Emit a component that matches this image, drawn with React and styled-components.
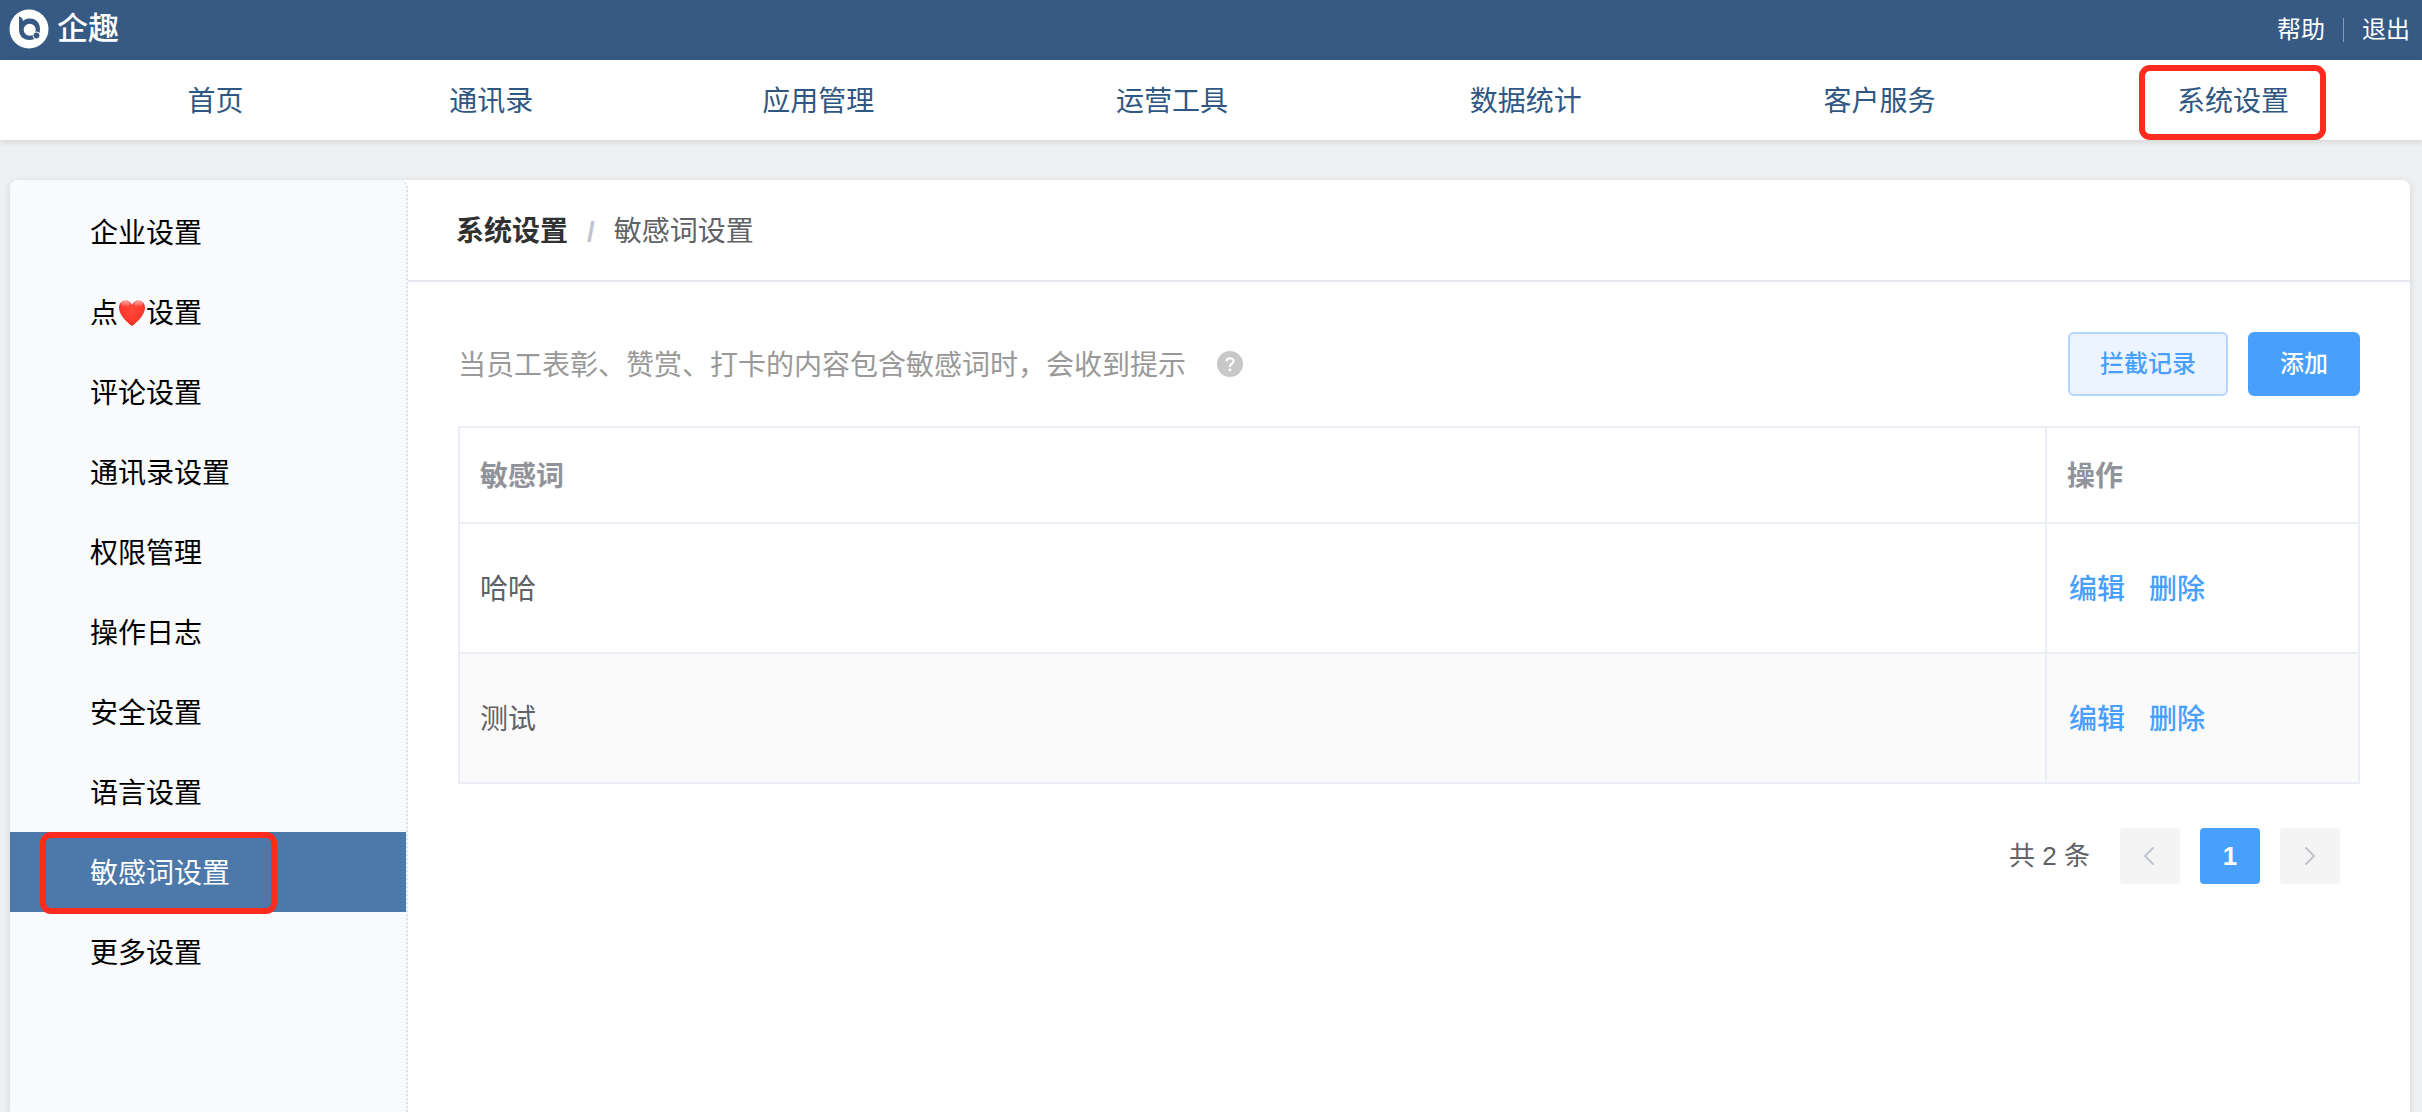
import React from 'react'
import styled, { createGlobalStyle, css } from 'styled-components';

const navItems = [
    { label: "首页", grow: 251 },
    { label: "通讯录", grow: 301 },
    { label: "应用管理", grow: 354 },
    { label: "运营工具", grow: 354 },
    { label: "数据统计", grow: 354 },
    { label: "客户服务", grow: 354 },
    { label: "系统设置", grow: 354, marked: true },
];

const menuItems = [
    { id: "company", label: "企业设置" },
    { id: "like", label: <>点<Heart />设置</> },
    { id: "comment", label: "评论设置" },
    { id: "contacts", label: "通讯录设置" },
    { id: "auth", label: "权限管理" },
    { id: "log", label: "操作日志" },
    { id: "safe", label: "安全设置" },
    { id: "lang", label: "语言设置" },
    { id: "words", label: "敏感词设置", active: true },
    { id: "more", label: "更多设置" },
];

const words = ["哈哈", "测试"];

function Logo() {
    return (
        <svg width="40" height="40" viewBox="0 0 40 40" aria-hidden="true">
            <circle cx="20" cy="20" r="19.5" fill="#fff" />
            <path d="M10 7.500 C12 8 13.500 9 14 12 C16 10 18.500 9.500 21 9.500 C27 9.500 31 14 31 20 C31 27 26.500 31 20.500 31 C14 31 10 27 10 20 Z" fill="#365a83" />
            <circle cx="20.700" cy="20.700" r="6" fill="#fff" />
            <circle cx="27.500" cy="26.500" r="3.500" fill="#365a83" stroke="#fff" strokeWidth="1" />
        </svg>
    )
}

function Heart() {
    return (
        <HeartIcon width="28" height="28" viewBox="0 0 28 28" role="img" aria-label="心">
            <defs>
                <radialGradient id="heart" cx="0.5" cy="0.4" r="0.65">
                    <stop offset="0" stopColor="#ff4a3c" />
                    <stop offset="0.7" stopColor="#f9352a" />
                    <stop offset="1" stopColor="#dc2a20" />
                </radialGradient>
                <linearGradient id="shine" x1="0" y1="0" x2="0" y2="1">
                    <stop offset="0" stopColor="#fff" stopOpacity="0.6" />
                    <stop offset="1" stopColor="#fff" stopOpacity="0" />
                </linearGradient>
            </defs>
            <path d="M14 27 C12.500 26 1 17.500 1 8.500 C1 4.500 4 1.500 7.500 1.500 C10.500 1.500 13 3.500 14 6 C15 3.500 17.500 1.500 20.500 1.500 C24 1.500 27 4.500 27 8.500 C27 17.500 15.500 26 14 27 Z" fill="url(#heart)" />
            <ellipse cx="7.500" cy="5" rx="4.500" ry="3" fill="url(#shine)" />
            <ellipse cx="20.500" cy="5" rx="4.500" ry="3" fill="url(#shine)" />
        </HeartIcon>
    )
}

function Arrow({ d }) {
    return (
        <svg width="24" height="24" viewBox="0 0 24 24" fill="none" stroke="#c0c4cc" strokeWidth="2" strokeLinecap="round" aria-hidden="true">
            <path d={d} />
        </svg>
    )
}

function App() {
    return (
        <Page>
            <GlobalStyle />
            <TopBar>
                <Brand href="#"><Logo />企趣</Brand>
                <TopLinks>
                    <TopLink href="#">帮助</TopLink>
                    <TopDivider />
                    <TopLink href="#">退出</TopLink>
                </TopLinks>
            </TopBar>

            <Nav>
                {navItems.map(item => (
                    <NavItem key={item.label} $grow={item.grow}>
                        <NavLink href="#" $marked={item.marked}>{item.label}</NavLink>
                    </NavItem>
                ))}
            </Nav>

            <Card>
                <Sidebar>
                    {menuItems.map(item => (
                        <MenuLink key={item.id} href="#" $active={item.active}>{item.label}</MenuLink>
                    ))}
                </Sidebar>

                <Main>
                    <Breadcrumb>
                        <CrumbLink href="#">系统设置</CrumbLink>
                        <Slash>/</Slash>
                        <span>敏感词设置</span>
                    </Breadcrumb>

                    <Content>
                        <Toolbar>
                            <Hint>当员工表彰、赞赏、打卡的内容包含敏感词时，会收到提示</Hint>
                            <HelpButton type="button" aria-label="帮助说明">
                                <svg width="26" height="26" viewBox="0 0 26 26" aria-hidden="true">
                                    <circle cx="13" cy="13" r="13" fill="#c8c8c8" />
                                    <path d="M9.500 10.500 C9.500 6 16.500 6 16.500 10.500 C16.500 12.500 13 12.500 13 16" fill="none" stroke="#fff" strokeWidth="2" />
                                    <circle cx="13" cy="19" r="1.400" fill="#fff" />
                                </svg>
                            </HelpButton>
                            <Buttons>
                                <Button type="button">拦截记录</Button>
                                <Button type="button" $primary>添加</Button>
                            </Buttons>
                        </Toolbar>

                        <Table>
                            <thead>
                                <tr>
                                    <Th>敏感词</Th>
                                    <Th $narrow>操作</Th>
                                </tr>
                            </thead>
                            <tbody>
                                {words.map(word => (
                                    <Row key={word}>
                                        <Td>{word}</Td>
                                        <Td>
                                            <Actions>
                                                <TextButton type="button">编辑</TextButton>
                                                <TextButton type="button">删除</TextButton>
                                            </Actions>
                                        </Td>
                                    </Row>
                                ))}
                            </tbody>
                        </Table>

                        <Pagination>
                            <Total>共 2 条</Total>
                            <PageButton type="button" aria-label="上一页" disabled><Arrow d="M15 4 L7 12 L15 20" /></PageButton>
                            <PageButton type="button" $current>1</PageButton>
                            <PageButton type="button" aria-label="下一页" disabled><Arrow d="M8 4 L16 12 L8 20" /></PageButton>
                        </Pagination>
                    </Content>
                </Main>
            </Card>
        </Page>
    )
}

const GlobalStyle = createGlobalStyle`
    * {
        box-sizing: border-box;
    }
    body {
        margin: 0;
        background: #eff0f2;
        font-family: "Liberation Sans", "Noto Sans CJK SC", sans-serif;
        font-size: 28px;
        line-height: 40px;
        color: #606266;
    }
    a {
        color: inherit;
        text-decoration: none;
    }
    button {
        font-family: inherit;
        line-height: inherit;
        cursor: pointer;
    }
`;

// red frame drawn over a highlighted link
const frame = css`
    position: relative;
    &::after {
        content: "";
        position: absolute;
        border: 6px solid #ff2b1e;
        border-radius: 11px;
        pointer-events: none;
    }
`;

const Page = styled.div`
    display: flex;
    flex-direction: column;
    min-height: 100vh;
`;

const TopBar = styled.header`
    display: flex;
    align-items: center;
    justify-content: space-between;
    height: 60px;
    padding: 0 12px 0 9px;
    background: #365a83;
    color: #fff;
`;

const Brand = styled.a`
    display: flex;
    align-items: center;
    gap: 8px;
    height: 58px;
    margin-bottom: 2px;
    font-size: 31px;
    font-weight: 500;
`;

const TopLinks = styled.div`
    display: flex;
    align-items: center;
    gap: 18px;
`;

const TopLink = styled.a`
    font-size: 24px;
`;

const TopDivider = styled.span`
    width: 1px;
    height: 24px;
    background: rgba(255, 255, 255, 0.4);
`;

const Nav = styled.nav`
    display: flex;
    height: 80px;
    padding: 4px 12px 0 90px;
    background: #fff;
    box-shadow: 0 2px 6px rgba(0, 0, 0, 0.12);
`;

const NavItem = styled.div`
    display: flex;
    flex: ${props => props.$grow} 1 0;
    align-items: center;
    justify-content: center;
`;

const NavLink = styled.a`
    color: #2f5782;
    ${props => props.$marked && css`
        ${frame}
        &::after {
            inset: -17px -37px -18px -38px;
        }
    `}
`;

const Card = styled.div`
    display: flex;
    flex: 1;
    margin: 40px 12px 0 10px;
    border-radius: 8px 8px 0 0;
    background: #fff;
    box-shadow: 0 2px 8px rgba(0, 0, 0, 0.12);
`;

const Sidebar = styled.nav`
    display: flex;
    flex: none;
    flex-direction: column;
    width: 398px;
    padding-top: 12px;
    border-right: 2px dotted #d8dfe6;
    border-radius: 8px 8px 0 0;
    background: #f9fafc;
`;

const MenuLink = styled.a`
    padding: 22px 0 18px 80px;
    color: ${props => props.$active ? "#fff" : "#000"};
    background: ${props => props.$active ? "#4d78aa" : "transparent"};
    ${props => props.$active && css`
        ${frame}
        &::after {
            inset: 0 119px -2px 30px;
            margin-right: 10px;
        }
    `}
`;

const HeartIcon = styled.svg`
    display: inline-block;
    vertical-align: -4px;
`;

const Main = styled.main`
    flex: 1;
    min-width: 0;
`;

const Breadcrumb = styled.div`
    display: flex;
    align-items: center;
    height: 102px;
    padding: 4px 48px 0;
    border-bottom: 2px solid #e4e7ed;
`;

const CrumbLink = styled.a`
    color: #303133;
    font-weight: 700;
`;

const Slash = styled.span`
    margin: 0 19px;
    color: #c0c4cc;
    font-weight: 700;
`;

const Content = styled.div`
    padding: 50px;
`;

const Toolbar = styled.div`
    display: flex;
    align-items: center;
`;

const Hint = styled.span`
    padding-top: 4px;
    color: #999;
`;

const HelpButton = styled.button`
    display: flex;
    margin-left: 31px;
    padding: 0;
    border: none;
    background: none;
`;

const Buttons = styled.div`
    display: flex;
    gap: 20px;
    margin-left: auto;
`;

const Button = styled.button`
    height: 64px;
    padding: 0 30px;
    border: 2px solid ${props => props.$primary ? "#489ffd" : "#b3d8ff"};
    border-radius: 6px;
    background: ${props => props.$primary ? "#489ffd" : "#ecf5ff"};
    color: ${props => props.$primary ? "#fff" : "#489ffd"};
    font-size: 24px;
    font-weight: 500;
`;

const Table = styled.table`
    width: 100%;
    margin-top: 30px;
    border: 2px solid #ebeef5;
    border-collapse: collapse;
    table-layout: fixed;
`;

const Th = styled.th`
    width: ${props => props.$narrow ? "313px" : "auto"};
    height: 96px;
    padding: 4px 20px 0;
    border: 2px solid #ebeef5;
    color: #909399;
    font-weight: 700;
    text-align: left;
`;

const Td = styled.td`
    height: 130px;
    padding: 4px 20px 0;
    border: 2px solid #ebeef5;
`;

const Row = styled.tr`
    &:nth-child(even) {
        background: #fafafa;
    }
`;

const Actions = styled.div`
    display: flex;
    gap: 20px;
`;

const TextButton = styled.button`
    padding: 0 2px;
    border: none;
    background: none;
    color: #489ffd;
    font-size: 28px;
    font-weight: 500;
`;

const Pagination = styled.div`
    display: flex;
    align-items: center;
    justify-content: flex-end;
    gap: 20px;
    margin-top: 44px;
    padding-right: 20px;
`;

const Total = styled.span`
    margin-right: 10px;
    font-size: 26px;
`;

const PageButton = styled.button`
    display: flex;
    align-items: center;
    justify-content: center;
    width: 60px;
    height: 56px;
    padding: 0;
    border: none;
    border-radius: 4px;
    background: ${props => props.$current ? "#489ffd" : "#f4f4f5"};
    color: #fff;
    font-size: 26px;
    font-weight: 700;
`;

export default App;
